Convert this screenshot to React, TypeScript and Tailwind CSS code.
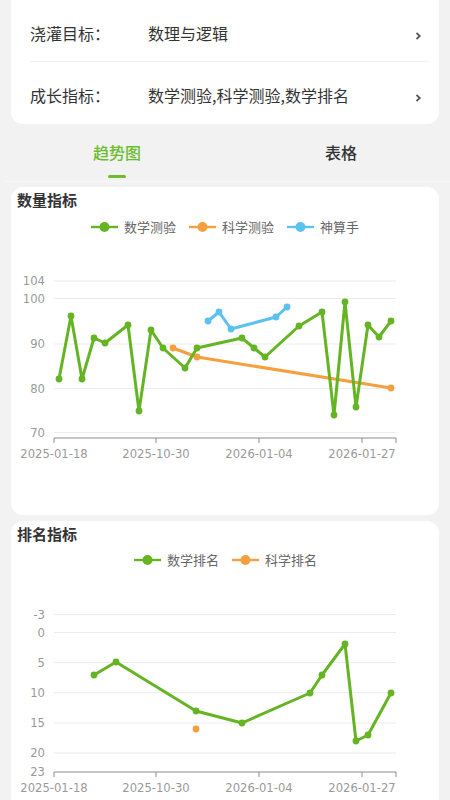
import React from 'react';

const GREEN = '#64b424';
const ORANGE = '#f5a03e';
const BLUE = '#5cc0f0';

type Pt = [number, number];

const qtyGreen: Pt[] = [
  [59, 379], [71, 316], [82, 379], [94, 338], [105, 343], [128, 325], [139, 411],
  [151, 330], [163, 348], [185, 368], [197, 348], [242, 338], [254, 348], [265, 357],
  [299, 326], [322, 312], [334, 415], [345, 302], [356, 407], [368, 325], [379, 337], [391, 321],
];
const qtyOrange: Pt[] = [[173, 348], [197, 357], [391, 388]];
const qtyBlue: Pt[] = [[208, 321], [219, 312], [231, 329], [276, 317], [287, 307]];

const rankGreen: Pt[] = [
  [94, 675], [116, 662], [196, 711], [242, 723], [310, 693], [322, 675], [345, 644],
  [356, 741], [368, 735], [391, 693],
];
const rankOrange: Pt[] = [[196, 729]];

const xTicks = [
  { x: 54, label: '2025-01-18' },
  { x: 156, label: '2025-10-30' },
  { x: 259, label: '2026-01-04' },
  { x: 362, label: '2026-01-27' },
];

const axisFont = { fontFamily: '"DejaVu Sans", sans-serif', fontSize: 11.6 };

const Series = ({ pts, color }: { pts: Pt[]; color: string }) => (
  <g>
    {pts.length > 1 && (
      <polyline
        points={pts.map((p) => p.join(',')).join(' ')}
        fill="none"
        stroke={color}
        strokeWidth={3}
        strokeLinejoin="round"
      />
    )}
    {pts.map((p, i) => (
      <circle key={i} cx={p[0]} cy={p[1]} r={3.4} fill={color} />
    ))}
  </g>
);

const Axis = ({ grids, axisY }: { grids: { y: number; label: string }[]; axisY: number }) => (
  <g>
    {grids.map((g) => (
      <g key={g.label}>
        {g.y < axisY - 1 && <line x1={54} x2={396} y1={g.y} y2={g.y} stroke="#ececec" strokeWidth={1} />}
        <text x={45} y={g.y + 4.3} textAnchor="end" fill="#999" style={axisFont}>
          {g.label}
        </text>
      </g>
    ))}
    <line x1={54} x2={396} y1={axisY} y2={axisY} stroke="#8c8c8c" strokeWidth={1} />
    {[54, 156, 259, 362, 396].map((x) => (
      <line key={x} x1={x} x2={x} y1={axisY} y2={axisY + 5} stroke="#8c8c8c" strokeWidth={1} />
    ))}
    {xTicks.map((t) => (
      <text key={t.label} x={t.x} y={axisY + 20} textAnchor="middle" fill="#999" style={axisFont}>
        {t.label}
      </text>
    ))}
  </g>
);

const LegendItem = ({ color, label }: { color: string; label: string }) => (
  <div className="flex items-center gap-[6px]">
    <svg width="27" height="12" viewBox="0 0 27 12">
      <line x1="0" x2="27" y1="6" y2="6" stroke={color} strokeWidth="2.4" />
      <circle cx="13.5" cy="6" r="5" fill={color} />
    </svg>
    <span className="text-[13px] leading-[20px] text-[#666]">{label}</span>
  </div>
);

const Chevron = () => (
  <svg width="8" height="12" viewBox="0 0 8 12" className="mt-[6px]">
    <polyline points="2.5,3 5.8,6 2.5,9" fill="none" stroke="#555" strokeWidth="1.7" />
  </svg>
);

const InfoRow = ({ label, value, className }: { label: string; value: string; className: string }) => (
  <div className={`flex items-center ${className}`}>
    <span className="w-[118px] text-[16px] text-[#333]">{label}</span>
    <span className="flex-1 text-[16px] text-[#333]">{value}</span>
    <div className="mr-[6px]">
      <Chevron />
    </div>
  </div>
);

export default function App() {
  return (
    <div
      className="w-[450px] h-[800px] overflow-hidden bg-[#f2f2f2]"
      style={{ fontFamily: '"Noto Sans CJK SC", "Noto Sans", sans-serif' }}
    >
      {/* Info card (scrolled, top cut off) */}
      <div className="mx-[11px] bg-white rounded-b-[12px] pl-[19px] pr-[11px]">
        <InfoRow label="浇灌目标：" value="数理与逻辑" className="h-[62px] pt-[4px] border-b border-[#f0f0f0]" />
        <InfoRow label="成长指标：" value="数学测验,科学测验,数学排名" className="h-[62px] pt-[4px]" />
      </div>

      {/* Tabs */}
      <div className="flex ml-[5px] w-[448px] h-[58px] border-b border-[#f7f7f7]">
        <div className="flex-1 flex flex-col items-center pt-[15px]">
          <span className="text-[16px] leading-[26px] font-medium text-[#6abd2e]">趋势图</span>
          <div className="mt-[10px] w-[18px] h-[3px] rounded-full bg-[#6abd2e]" />
        </div>
        <div className="flex-1 flex flex-col items-center pt-[15px]">
          <span className="text-[16px] leading-[26px] font-medium text-[#333]">表格</span>
        </div>
      </div>

      {/* Quantity chart */}
      <div className="mx-[11px] mt-[5px] h-[328px] bg-white rounded-[12px] flex flex-col">
        <div className="pl-[6px] pt-[3px] text-[15px] leading-[20px] font-bold text-[#333]">数量指标</div>
        <div className="mt-[7px] flex items-center pl-[80px] gap-[13px]">
          <LegendItem color={GREEN} label="数学测验" />
          <LegendItem color={ORANGE} label="科学测验" />
          <LegendItem color={BLUE} label="神算手" />
        </div>
        <svg width="428" height="278" viewBox="11 237 428 278">
          <Axis
            axisY={438}
            grids={[
              { y: 281, label: '104' },
              { y: 298.5, label: '100' },
              { y: 344, label: '90' },
              { y: 388.5, label: '80' },
              { y: 432.5, label: '70' },
            ]}
          />
          <Series pts={qtyOrange} color={ORANGE} />
          <Series pts={qtyGreen} color={GREEN} />
          <Series pts={qtyBlue} color={BLUE} />
        </svg>
      </div>

      {/* Rank chart */}
      <div className="mx-[11px] mt-[6px] h-[330px] bg-white rounded-[12px] flex flex-col">
        <div className="pl-[6px] pt-[3px] text-[15px] leading-[20px] font-bold text-[#333]">排名指标</div>
        <div className="mt-[6px] flex items-center pl-[123px] gap-[13px]">
          <LegendItem color={GREEN} label="数学排名" />
          <LegendItem color={ORANGE} label="科学排名" />
        </div>
        <svg width="428" height="281" viewBox="11 570 428 281">
          <Axis
            axisY={772}
            grids={[
              { y: 614.5, label: '-3' },
              { y: 632.5, label: '0' },
              { y: 662.5, label: '5' },
              { y: 692.7, label: '10' },
              { y: 723, label: '15' },
              { y: 753, label: '20' },
              { y: 772, label: '23' },
            ]}
          />
          <Series pts={rankOrange} color={ORANGE} />
          <Series pts={rankGreen} color={GREEN} />
        </svg>
      </div>
    </div>
  );
}
